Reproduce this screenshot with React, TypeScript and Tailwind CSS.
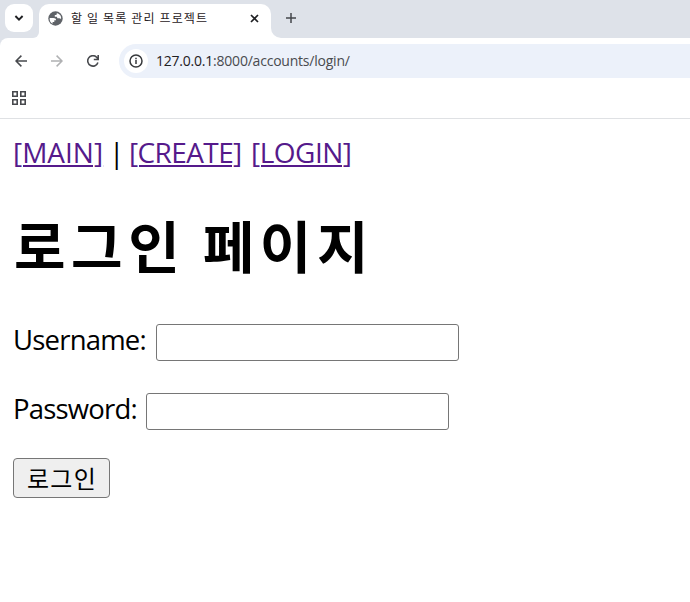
import React from "react";

const latin = "font-['Open_Sans','Noto_Sans_CJK_KR',sans-serif]";
const korean = "font-['Noto_Sans_CJK_KR',sans-serif]";

function TabStrip() {
  return (
    <div className="flex h-[38px] bg-[#dee2e9]">
      <div className="ml-[5px] mt-1 flex h-7 w-7 shrink-0 items-center justify-center rounded-[9px] bg-white">
        <svg width="10" height="10" viewBox="0 0 10 10" fill="none" stroke="#1f2023" strokeWidth="1.9">
          <path d="M1.4 3 5 6.6 8.6 3" />
        </svg>
      </div>
      <div className="-ml-1 flex h-[38px] items-end">
        <div className="h-[6px] w-[10px] bg-white">
          <div className="h-full w-full rounded-br-[10px] bg-[#dee2e9]" />
        </div>
      </div>
      <div className="mt-1 flex h-[34px] w-[232px] items-start rounded-t-[10px] bg-white">
        <svg className="ml-[9px] mt-[7px]" width="15" height="15" viewBox="0 0 15 15">
          <circle cx="7.5" cy="7.5" r="7.2" fill="#5f6368" />
          <path d="M1.7 6.9h3.7c1.7 0 2.7.8 2.7 2.3H6.3v1.9H4.6v1.6A5.9 5.9 0 0 1 1.7 6.9Z" fill="#fff" />
          <path d="M8.8 1.9c.3 1.5-.4 2.2-2 2.2v1.7h1.4c.9 0 1.1.6 1.1 1.5h1.9c.9 0 1.4.4 1.9 1A5.9 5.9 0 0 0 8.8 1.9Z" fill="#fff" />
        </svg>
        <span className={`ml-[8px] mt-[4px] w-[160px] whitespace-nowrap text-[12px] leading-[20px] tracking-[1.15px] text-[#1f2023] ${korean}`}>
          할 일 목록 관리 프로젝트
        </span>
        <svg className="ml-[19px] mt-[10px]" width="9" height="9" viewBox="0 0 9 9" stroke="#1f2023" strokeWidth="1.7">
          <path d="m1 1 7 7M8 1 1 8" />
        </svg>
      </div>
      <div className="flex h-[38px] items-end">
        <div className="h-[10px] w-[10px] bg-white">
          <div className="h-full w-full rounded-bl-[10px] bg-[#dee2e9]" />
        </div>
      </div>
      <svg className="ml-[5px] mt-[13px]" width="10" height="10" viewBox="0 0 10 10" stroke="#44474b" strokeWidth="1.5">
        <path d="M5 0v10M0 5h10" />
      </svg>
    </div>
  );
}

function Toolbar() {
  return (
    <div className="bg-[#dee2e9]">
      <div className="flex h-11 items-center rounded-tl-[8px] bg-white pt-[2px]">
        <svg className="ml-[15px]" width="12" height="12" viewBox="0 0 12 12" fill="none" stroke="#47494d" strokeWidth="1.5">
          <path d="M12 6H1M6.4.6 1 6l5.4 5.4" />
        </svg>
        <svg className="ml-6" width="12" height="12" viewBox="0 0 12 12" fill="none" stroke="#b0b1b3" strokeWidth="1.5">
          <path d="M0 6h11M5.6.6 11 6l-5.4 5.4" />
        </svg>
        <svg className="ml-6" width="12" height="12" viewBox="0 0 12 12" fill="none" stroke="#47494d" strokeWidth="1.6">
          <path d="M10.9 7.4A5.2 5.2 0 1 1 9.6 2.2L11 3.7M11.2 0v4.5H6.8" />
        </svg>
        <div className="ml-5 flex h-[34px] grow items-center rounded-l-full bg-[#ecf1fa] pl-[5px]">
          <div className="flex h-6 w-6 items-center justify-center rounded-full bg-white">
            <svg width="14" height="14" viewBox="0 0 14 14" fill="none" stroke="#37393c" strokeWidth="1.5">
              <circle cx="7" cy="7" r="6" />
              <path d="M7 6.1V10M7 3.7v1.5" />
            </svg>
          </div>
          <span className={`ml-[8px] whitespace-nowrap text-[14px] leading-5 tracking-[-0.22px] text-[#494b4f] ${latin}`}>
            <span className="text-[#1f2023]">127.0.0.1</span>:8000/accounts/login/
          </span>
        </div>
      </div>
    </div>
  );
}

function BookmarkBar() {
  return (
    <div className="flex h-[37px] border-b border-[#dfe1e4] bg-white">
      <svg className="ml-3 mt-[9px]" width="14" height="14" viewBox="0 0 14 14" fill="none" stroke="#47494d" strokeWidth="1.6">
        <path d="M.8.8h4.4v4.4H.8zM8.8.8h4.4v4.4H8.8zM.8 8.8h4.4v4.4H.8zM8.8 8.8h4.4v4.4H8.8z" />
      </svg>
    </div>
  );
}

export default function App() {
  return (
    <div className="h-[602px] w-[690px] overflow-hidden bg-white">
      <TabStrip />
      <Toolbar />
      <BookmarkBar />
      <main className={`pl-[13px] text-[28px] leading-[38px] text-black ${latin}`}>
        <nav className="mt-[14px] flex whitespace-nowrap">
          <a className="w-[90px] text-[#551a8b] underline decoration-2 underline-offset-[2px]">[MAIN]</a>
          <span className="ml-[6px] w-5">|</span>
          <a className="w-[114px] tracking-[-0.6px] text-[#551a8b] underline decoration-2 underline-offset-[2px]">[CREATE]</a>
          <a className="ml-2 tracking-[-0.5px] text-[#551a8b] underline decoration-2 underline-offset-[2px]">[LOGIN]</a>
        </nav>
        <h1 className={`mt-[35px] whitespace-nowrap pl-px text-[56px] font-bold leading-[76px] tracking-[5.6px] [word-spacing:-1px] ${korean}`}>로그인 페이지</h1>
        <div className="mt-[42px] flex h-[37px] items-start">
          <label className="-mt-[3px] w-[143px] whitespace-nowrap text-[27.5px] tracking-[-0.8px]">Username:</label>
          <input className="h-[37px] w-[303px] rounded-[3px] border border-[#767676] bg-white" />
        </div>
        <div className="mt-8 flex h-[37px] items-start">
          <label className="-mt-[3px] w-[133px] whitespace-nowrap text-[27.5px] tracking-[-0.8px]">Password:</label>
          <input type="password" className="h-[37px] w-[303px] rounded-[3px] border border-[#767676] bg-white" />
        </div>
        <button className={`mt-7 flex h-10 w-[97px] items-center justify-center whitespace-nowrap rounded-[4px] border border-[#767676] bg-[#efefef] pb-px pl-px text-[24px] leading-[38px] tracking-[1.2px] ${korean}`}>
          로그인
        </button>
      </main>
    </div>
  );
}
